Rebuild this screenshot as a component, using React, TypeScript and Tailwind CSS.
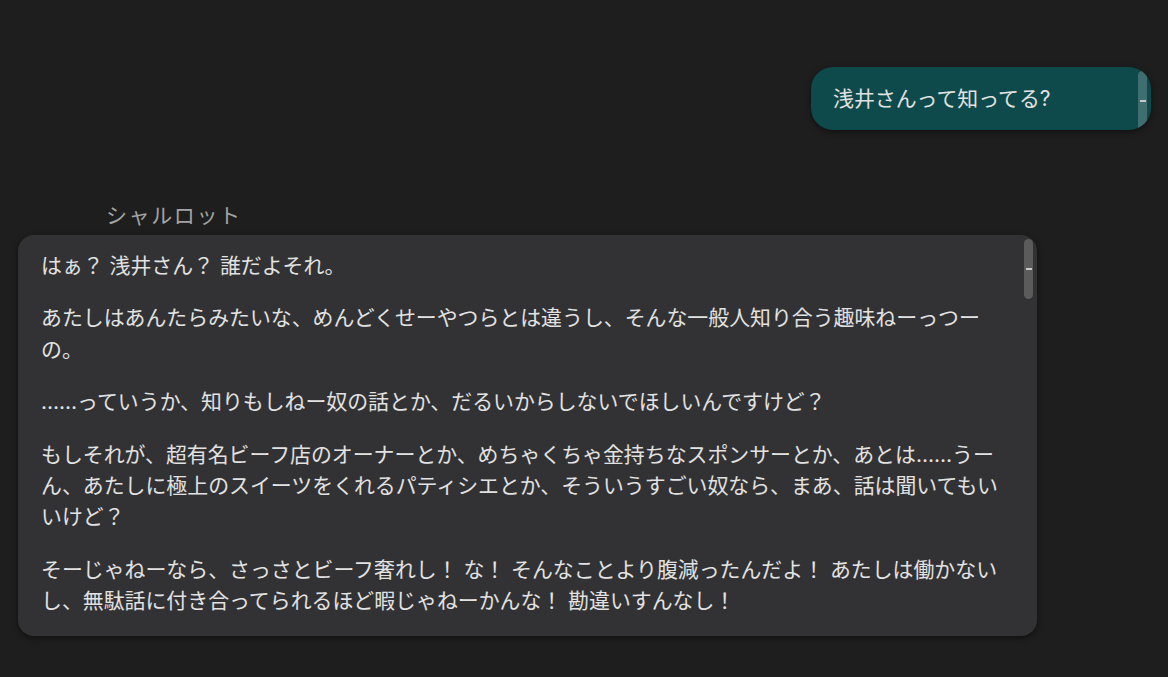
import React from "react";

const Thumb = () => (
  <div className="absolute right-[4px] top-[4px] w-[9px] h-[60px] rounded-full bg-white/20 flex items-center justify-center">
    <div className="w-[6px] h-[2px] bg-[#c8c8c8]" />
  </div>
);

const paragraphs = [
  "はぁ？ 浅井さん？ 誰だよそれ。",
  "あたしはあんたらみたいな、めんどくせーやつらとは違うし、そんな一般人知り合う趣味ねーっつーの。",
  "……っていうか、知りもしねー奴の話とか、だるいからしないでほしいんですけど？",
  "もしそれが、超有名ビーフ店のオーナーとか、めちゃくちゃ金持ちなスポンサーとか、あとは……うーん、あたしに極上のスイーツをくれるパティシエとか、そういうすごい奴なら、まあ、話は聞いてもいいけど？",
  "そーじゃねーなら、さっさとビーフ奢れし！ な！ そんなことより腹減ったんだよ！ あたしは働かないし、無駄話に付き合ってられるほど暇じゃねーかんな！ 勘違いすんなし！",
];

export default function App() {
  return (
    <div
      className="min-h-screen w-full bg-[#1e1e1e] px-[17px] pt-[67px] pb-[41px] text-[#e2e2e2]"
      style={{ fontFamily: '"Inter", "Noto Sans CJK JP", sans-serif' }}
    >
      <div className="flex justify-end">
        <div className="relative w-[340px] h-[63px] overflow-hidden rounded-[22px] bg-[#0e4a4b] pl-[22px] pr-[23px] py-[16px] text-[20.9px] leading-[31px] shadow-[0_2px_6px_rgba(0,0,0,0.45)]">
          浅井さんって知ってる?
          <Thumb />
        </div>
      </div>

      <div className="mt-[72px]">
        <div className="pl-[89px] text-[21px] leading-[28px] tracking-[1.6px] text-[#a3a3a3]">
          シャルロット
        </div>
        <div className="relative mt-[5px] mr-[114px] ml-[1px] overflow-hidden rounded-[16px] bg-[#323234] pl-[23px] pr-[24px] pt-[15px] pb-[19px] text-[20.9px] leading-[31.4px] shadow-[0_2px_6px_rgba(0,0,0,0.45)]">
          <div className="flex flex-col gap-[21px]">
            {paragraphs.map((p, i) => (
              <p key={i}>{p}</p>
            ))}
          </div>
          <Thumb />
        </div>
      </div>
    </div>
  );
}
